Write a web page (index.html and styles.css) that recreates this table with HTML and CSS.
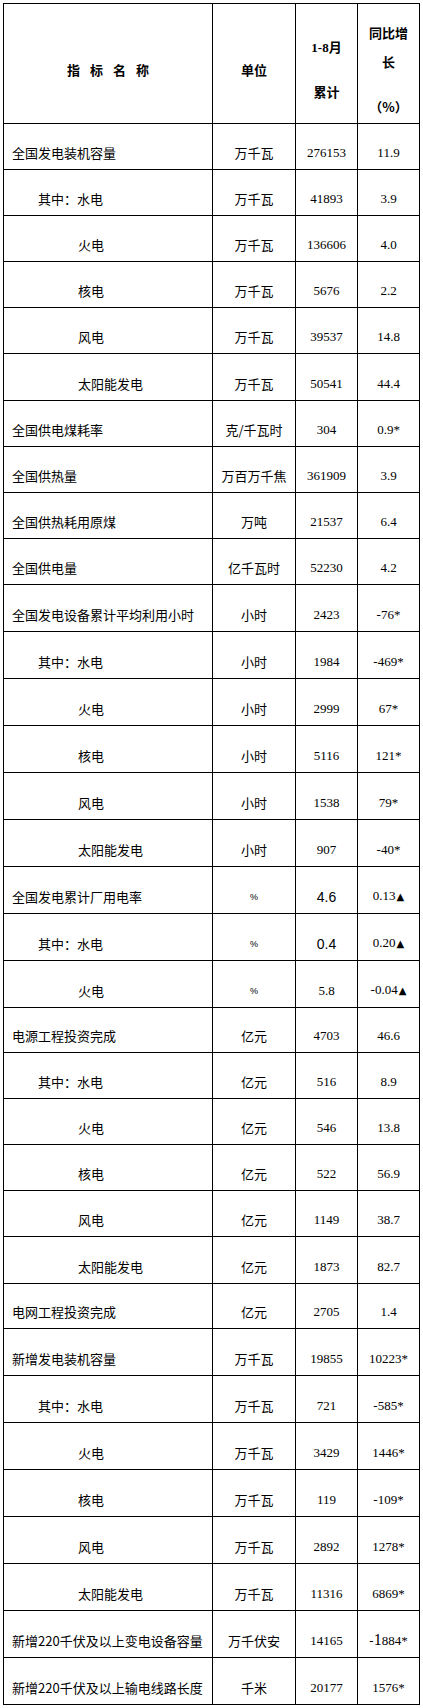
FILE: index.html
```html
<!DOCTYPE html>
<html lang="zh-CN">
<head>
<meta charset="utf-8">
<title>电力工业统计</title>
<link rel="stylesheet" href="styles.css">
</head>
<body>
<table class="stats">
  <colgroup>
    <col class="c-name"><col class="c-unit"><col class="c-val"><col class="c-chg">
  </colgroup>
  <thead>
    <tr class="head">
      <th class="h-name"><span class="spaced">指标名称</span></th>
      <th class="h-unit">单位</th>
      <th class="h-val"><div class="hv1">1-8月</div><div class="hv2">累计</div></th>
      <th class="h-chg"><div class="hc1">同比增</div><div class="hc2">长</div><div class="hc3">（%）</div></th>
    </tr>
  </thead>
  <tbody>
    <tr class="r46"><td class="name">全国发电装机容量</td><td class="unit">万千瓦</td><td class="num">276153</td><td class="num">11.9</td></tr>
    <tr class="r46"><td class="name l1">其中：水电</td><td class="unit">万千瓦</td><td class="num">41893</td><td class="num">3.9</td></tr>
    <tr class="r46"><td class="name l2">火电</td><td class="unit">万千瓦</td><td class="num">136606</td><td class="num">4.0</td></tr>
    <tr class="r46"><td class="name l2">核电</td><td class="unit">万千瓦</td><td class="num">5676</td><td class="num">2.2</td></tr>
    <tr class="r46"><td class="name l2">风电</td><td class="unit">万千瓦</td><td class="num">39537</td><td class="num">14.8</td></tr>
    <tr class="r47"><td class="name l2">太阳能发电</td><td class="unit">万千瓦</td><td class="num">50541</td><td class="num">44.4</td></tr>
    <tr class="r46"><td class="name">全国供电煤耗率</td><td class="unit">克/千瓦时</td><td class="num">304</td><td class="num">0.9*</td></tr>
    <tr class="r46"><td class="name">全国供热量</td><td class="unit">万百万千焦</td><td class="num">361909</td><td class="num">3.9</td></tr>
    <tr class="r46"><td class="name">全国供热耗用原煤</td><td class="unit">万吨</td><td class="num">21537</td><td class="num">6.4</td></tr>
    <tr class="r46"><td class="name">全国供电量</td><td class="unit">亿千瓦时</td><td class="num">52230</td><td class="num">4.2</td></tr>
    <tr class="r47"><td class="name">全国发电设备累计平均利用小时</td><td class="unit">小时</td><td class="num">2423</td><td class="num">-76*</td></tr>
    <tr class="r47"><td class="name l1">其中：水电</td><td class="unit">小时</td><td class="num">1984</td><td class="num">-469*</td></tr>
    <tr class="r47"><td class="name l2">火电</td><td class="unit">小时</td><td class="num">2999</td><td class="num">67*</td></tr>
    <tr class="r47"><td class="name l2">核电</td><td class="unit">小时</td><td class="num">5116</td><td class="num">121*</td></tr>
    <tr class="r47"><td class="name l2">风电</td><td class="unit">小时</td><td class="num">1538</td><td class="num">79*</td></tr>
    <tr class="r47"><td class="name l2">太阳能发电</td><td class="unit">小时</td><td class="num">907</td><td class="num">-40*</td></tr>
    <tr class="r47"><td class="name">全国发电累计厂用电率</td><td class="unit pct">%</td><td class="num big">4.6</td><td class="num">0.13<span class="tri">▲</span></td></tr>
    <tr class="r47"><td class="name l1">其中：水电</td><td class="unit pct">%</td><td class="num big">0.4</td><td class="num">0.20<span class="tri">▲</span></td></tr>
    <tr class="r47"><td class="name l2">火电</td><td class="unit pct">%</td><td class="num">5.8</td><td class="num">-0.04<span class="tri">▲</span></td></tr>
    <tr class="r45"><td class="name">电源工程投资完成</td><td class="unit">亿元</td><td class="num">4703</td><td class="num">46.6</td></tr>
    <tr class="r46"><td class="name l1">其中：水电</td><td class="unit">亿元</td><td class="num">516</td><td class="num">8.9</td></tr>
    <tr class="r46"><td class="name l2">火电</td><td class="unit">亿元</td><td class="num">546</td><td class="num">13.8</td></tr>
    <tr class="r46"><td class="name l2">核电</td><td class="unit">亿元</td><td class="num">522</td><td class="num">56.9</td></tr>
    <tr class="r46"><td class="name l2">风电</td><td class="unit">亿元</td><td class="num">1149</td><td class="num">38.7</td></tr>
    <tr class="r47"><td class="name l2">太阳能发电</td><td class="unit">亿元</td><td class="num">1873</td><td class="num">82.7</td></tr>
    <tr class="r45"><td class="name">电网工程投资完成</td><td class="unit">亿元</td><td class="num">2705</td><td class="num">1.4</td></tr>
    <tr class="r47"><td class="name">新增发电装机容量</td><td class="unit">万千瓦</td><td class="num">19855</td><td class="num">10223*</td></tr>
    <tr class="r47"><td class="name l1">其中：水电</td><td class="unit">万千瓦</td><td class="num">721</td><td class="num">-585*</td></tr>
    <tr class="r47"><td class="name l2">火电</td><td class="unit">万千瓦</td><td class="num">3429</td><td class="num">1446*</td></tr>
    <tr class="r47"><td class="name l2">核电</td><td class="unit">万千瓦</td><td class="num">119</td><td class="num">-109*</td></tr>
    <tr class="r47"><td class="name l2">风电</td><td class="unit">万千瓦</td><td class="num">2892</td><td class="num">1278*</td></tr>
    <tr class="r47"><td class="name l2">太阳能发电</td><td class="unit">万千瓦</td><td class="num">11316</td><td class="num">6869*</td></tr>
    <tr class="r47"><td class="name">新增220千伏及以上变电设备容量</td><td class="unit">万千伏安</td><td class="num">14165</td><td class="num">-<span class="one">1</span>884*</td></tr>
    <tr class="r47"><td class="name">新增220千伏及以上输电线路长度</td><td class="unit">千米</td><td class="num">20177</td><td class="num">1576*</td></tr>
  </tbody>
</table>
</body>
</html>
```

FILE: styles.css
```css
html, body {
  margin: 0;
  padding: 0;
  background: #ffffff;
}

body {
  color: #000000;
  font-family: "Liberation Serif", "Noto Sans CJK SC", serif;
  font-size: 13px;
}

.stats {
  border-collapse: collapse;
  table-layout: fixed;
  width: 417px;
  margin: 3px 0 0 3px;
}

.c-name { width: 209px; }
.c-unit { width: 83px; }
.c-val { width: 62px; }
.c-chg { width: 62px; }

.stats th,
.stats td {
  border: 1px solid #000000;
  padding: 0;
}

/* header */
.head { height: 120px; }

.stats th {
  vertical-align: top;
  text-align: center;
  font-weight: bold;
  line-height: 20px;
  font-family: "Liberation Serif", "Noto Sans CJK SC", serif;
}

.stats th.h-name,
.stats th.h-unit {
  padding-top: 56px;
  font-family: "Noto Sans CJK SC", sans-serif;
}

.spaced {
  letter-spacing: 10px;
  margin-right: -10px;
}

.h-val .hv1 { margin-top: 34px; }
.h-val .hv2 { margin-top: 24px; font-family: "Noto Sans CJK SC", sans-serif; }

.stats th.h-chg { font-family: "Noto Sans CJK SC", sans-serif; }
.h-chg .hc1 { margin-top: 19px; }
.h-chg .hc2 { margin-top: 9px; }
.h-chg .hc3 { margin-top: 25px; }

/* body rows */
.r45 { height: 45px; }
.r46 { height: 46px; }
.r47 { height: 47px; }

.stats td {
  vertical-align: bottom;
  padding-bottom: 6px;
  line-height: 20px;
}

.stats td.name {
  text-align: left;
  padding-left: 8px;
  font-family: "Noto Sans CJK SC", sans-serif;
  white-space: nowrap;
}

.stats td.l1 { padding-left: 34px; }
.stats td.l2 { padding-left: 74px; }

.stats td.unit {
  text-align: center;
  font-family: "Noto Sans CJK SC", sans-serif;
  white-space: nowrap;
}

.stats td.pct {
  font-family: "Liberation Sans", sans-serif;
  font-size: 9px;
}

.stats td.num {
  text-align: center;
  white-space: nowrap;
}

.stats td.big {
  font-family: "Liberation Sans", sans-serif;
  font-size: 14px;
}

.tri {
  font-family: "DejaVu Sans", sans-serif;
  font-size: 10px;
  margin-left: 1px;
}

.one {
  font-size: 16px;
}
```
